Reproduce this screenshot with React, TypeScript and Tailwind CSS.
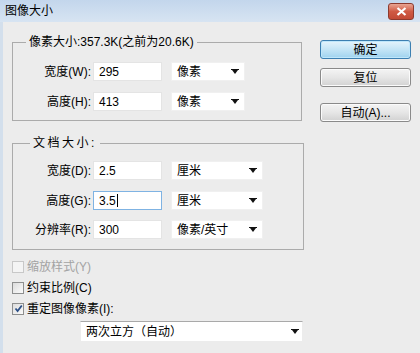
import React from "react";

function Arrow() {
  return (
    <svg width="8" height="5" viewBox="0 0 8 5" className="shrink-0">
      <path d="M0 0h8v1H0z M1 1h6L4 5z" fill="#111" />
    </svg>
  );
}

function Select({ text, w }: { text: string; w: string }) {
  return (
    <div className={`${w} h-[19px] bg-white border border-[#f0f0f0] flex items-center pl-[5px] pr-[5px] justify-between`}>
      <span>{text}</span>
      <Arrow />
    </div>
  );
}

function Input({ value, focused }: { value: string; focused?: boolean }) {
  return (
    <div
      className={`w-[69px] h-[19px] bg-white border flex items-center pl-[5px] ${
        focused ? "border-[#7fb3e3]" : "border-[#e4e4e4]"
      }`}
    >
      <span>{value}</span>
      {focused && <span className="w-px h-[13px] bg-black ml-[1px]" />}
    </div>
  );
}

function Row({
  label,
  value,
  unit,
  selW,
  focused,
  mt,
}: {
  label: string;
  value: string;
  unit: string;
  selW: string;
  focused?: boolean;
  mt: string;
}) {
  return (
    <div className={`flex items-center ${mt}`}>
      <div className="w-[78px] text-right">{label}</div>
      <div className="ml-[2px]">
        <Input value={value} focused={focused} />
      </div>
      <div className="ml-[9px]">
        <Select text={unit} w={selW} />
      </div>
    </div>
  );
}

function Checkbox({ checked, disabled }: { checked?: boolean; disabled?: boolean }) {
  return (
    <div
      className={`w-[12px] h-[12px] border flex items-center justify-center ${
        disabled
          ? "border-[#c8c8c8] bg-[#f4f4f4]"
          : "border-[#8e8f8f] bg-gradient-to-br from-[#dcdcdc] to-[#fbfbfb]"
      }`}
    >
      {checked && (
        <svg width="9" height="9" viewBox="0 0 9 9">
          <path d="M1.5 4.5 L3.6 7 L7.8 1.5" stroke="#2b4f86" strokeWidth="1.8" fill="none" />
        </svg>
      )}
    </div>
  );
}

function Button({ text, primary, mt }: { text: string; primary?: boolean; mt: string }) {
  return (
    <div
      className={`${mt} w-[91px] h-[19px] rounded-[3px] border flex items-center justify-center ${
        primary
          ? "border-[#3c7fb1] bg-gradient-to-b from-[#e5f4fc] via-[#c4e5f6] to-[#9fd3ef] shadow-[inset_0_0_0_1px_#bfe7fb]"
          : "border-[#8a8a8a] bg-gradient-to-b from-[#f4f4f4] via-[#e6e6e6] to-[#d2d2d2] shadow-[inset_0_0_0_1px_#fbfbfb]"
      }`}
    >
      {text}
    </div>
  );
}

export default function App() {
  return (
    <div className="w-[420px] h-[353px] overflow-hidden bg-[#ececec] text-[12px] leading-[14px] text-black font-['Liberation_Sans','Noto_Sans_CJK_SC',sans-serif]">
      <div className="h-[22px] flex items-center pl-[5px] bg-gradient-to-b from-[#c3d6ec] to-[#d7e4f2]">
        <span className="text-[12px]">图像大小</span>
        <div className="ml-auto mr-[6px] w-[26px] h-[17px] rounded-[3px] border border-[#8c3a2e] bg-gradient-to-b from-[#e8a493] via-[#cf5a44] to-[#c24a35] flex items-center justify-center">
          <svg width="11" height="9" viewBox="0 0 11 9">
            <path d="M1.5 1 L9.5 8 M9.5 1 L1.5 8" stroke="#fff" strokeWidth="2.2" />
          </svg>
        </div>
      </div>
      <div className="flex border-l-[3px] border-[#d3dfec] h-[331px]">
        <div className="ml-[9px] w-[292px] flex flex-col">
          <fieldset className="mt-[13px] w-[290px] h-[86px] border border-[#ababab]">
            <legend className="ml-[13px] px-[3px]">像素大小:357.3K(之前为20.6K)</legend>
            <Row label="宽度(W):" value="295" unit="像素" selW="w-[74px]" mt="mt-[13px]" />
            <Row label="高度(H):" value="413" unit="像素" selW="w-[74px]" mt="mt-[11px]" />
          </fieldset>
          <fieldset className="mt-[15px] w-[292px] h-[114px] border border-[#ababab]">
            <legend className="ml-[17px] px-[3px] tracking-[2.5px]">文档大小:</legend>
            <Row label="宽度(D):" value="2.5" unit="厘米" selW="w-[92px]" mt="mt-[11px]" />
            <Row label="高度(G):" value="3.5" unit="厘米" selW="w-[92px]" mt="mt-[11px]" focused />
            <Row label="分辨率(R):" value="300" unit="像素/英寸" selW="w-[92px]" mt="mt-[10px]" />
          </fieldset>
          <div className="mt-[6px] flex flex-col">
            <div className="h-[21px] flex items-center">
              <Checkbox disabled />
              <span className="ml-[3px] text-[#a3a3a3]">缩放样式(Y)</span>
            </div>
            <div className="h-[21px] flex items-center">
              <Checkbox />
              <span className="ml-[3px]">约束比例(C)</span>
            </div>
            <div className="h-[21px] flex items-center">
              <Checkbox checked />
              <span className="ml-[3px]">重定图像像素(I):</span>
            </div>
          </div>
          <div className="mt-[2px] ml-[68px] w-[223px] h-[21px] bg-white border border-[#ececec] border-t-[#a9a9a9] flex items-center justify-between pl-[5px] pr-[3px]">
            <span>两次立方（自动）</span>
            <Arrow />
          </div>
        </div>
        <div className="ml-[16px] flex flex-col">
          <Button text="确定" primary mt="mt-[18px]" />
          <Button text="复位" mt="mt-[9px]" />
          <Button text="自动(A)..." mt="mt-[16px]" />
        </div>
      </div>
    </div>
  );
}
